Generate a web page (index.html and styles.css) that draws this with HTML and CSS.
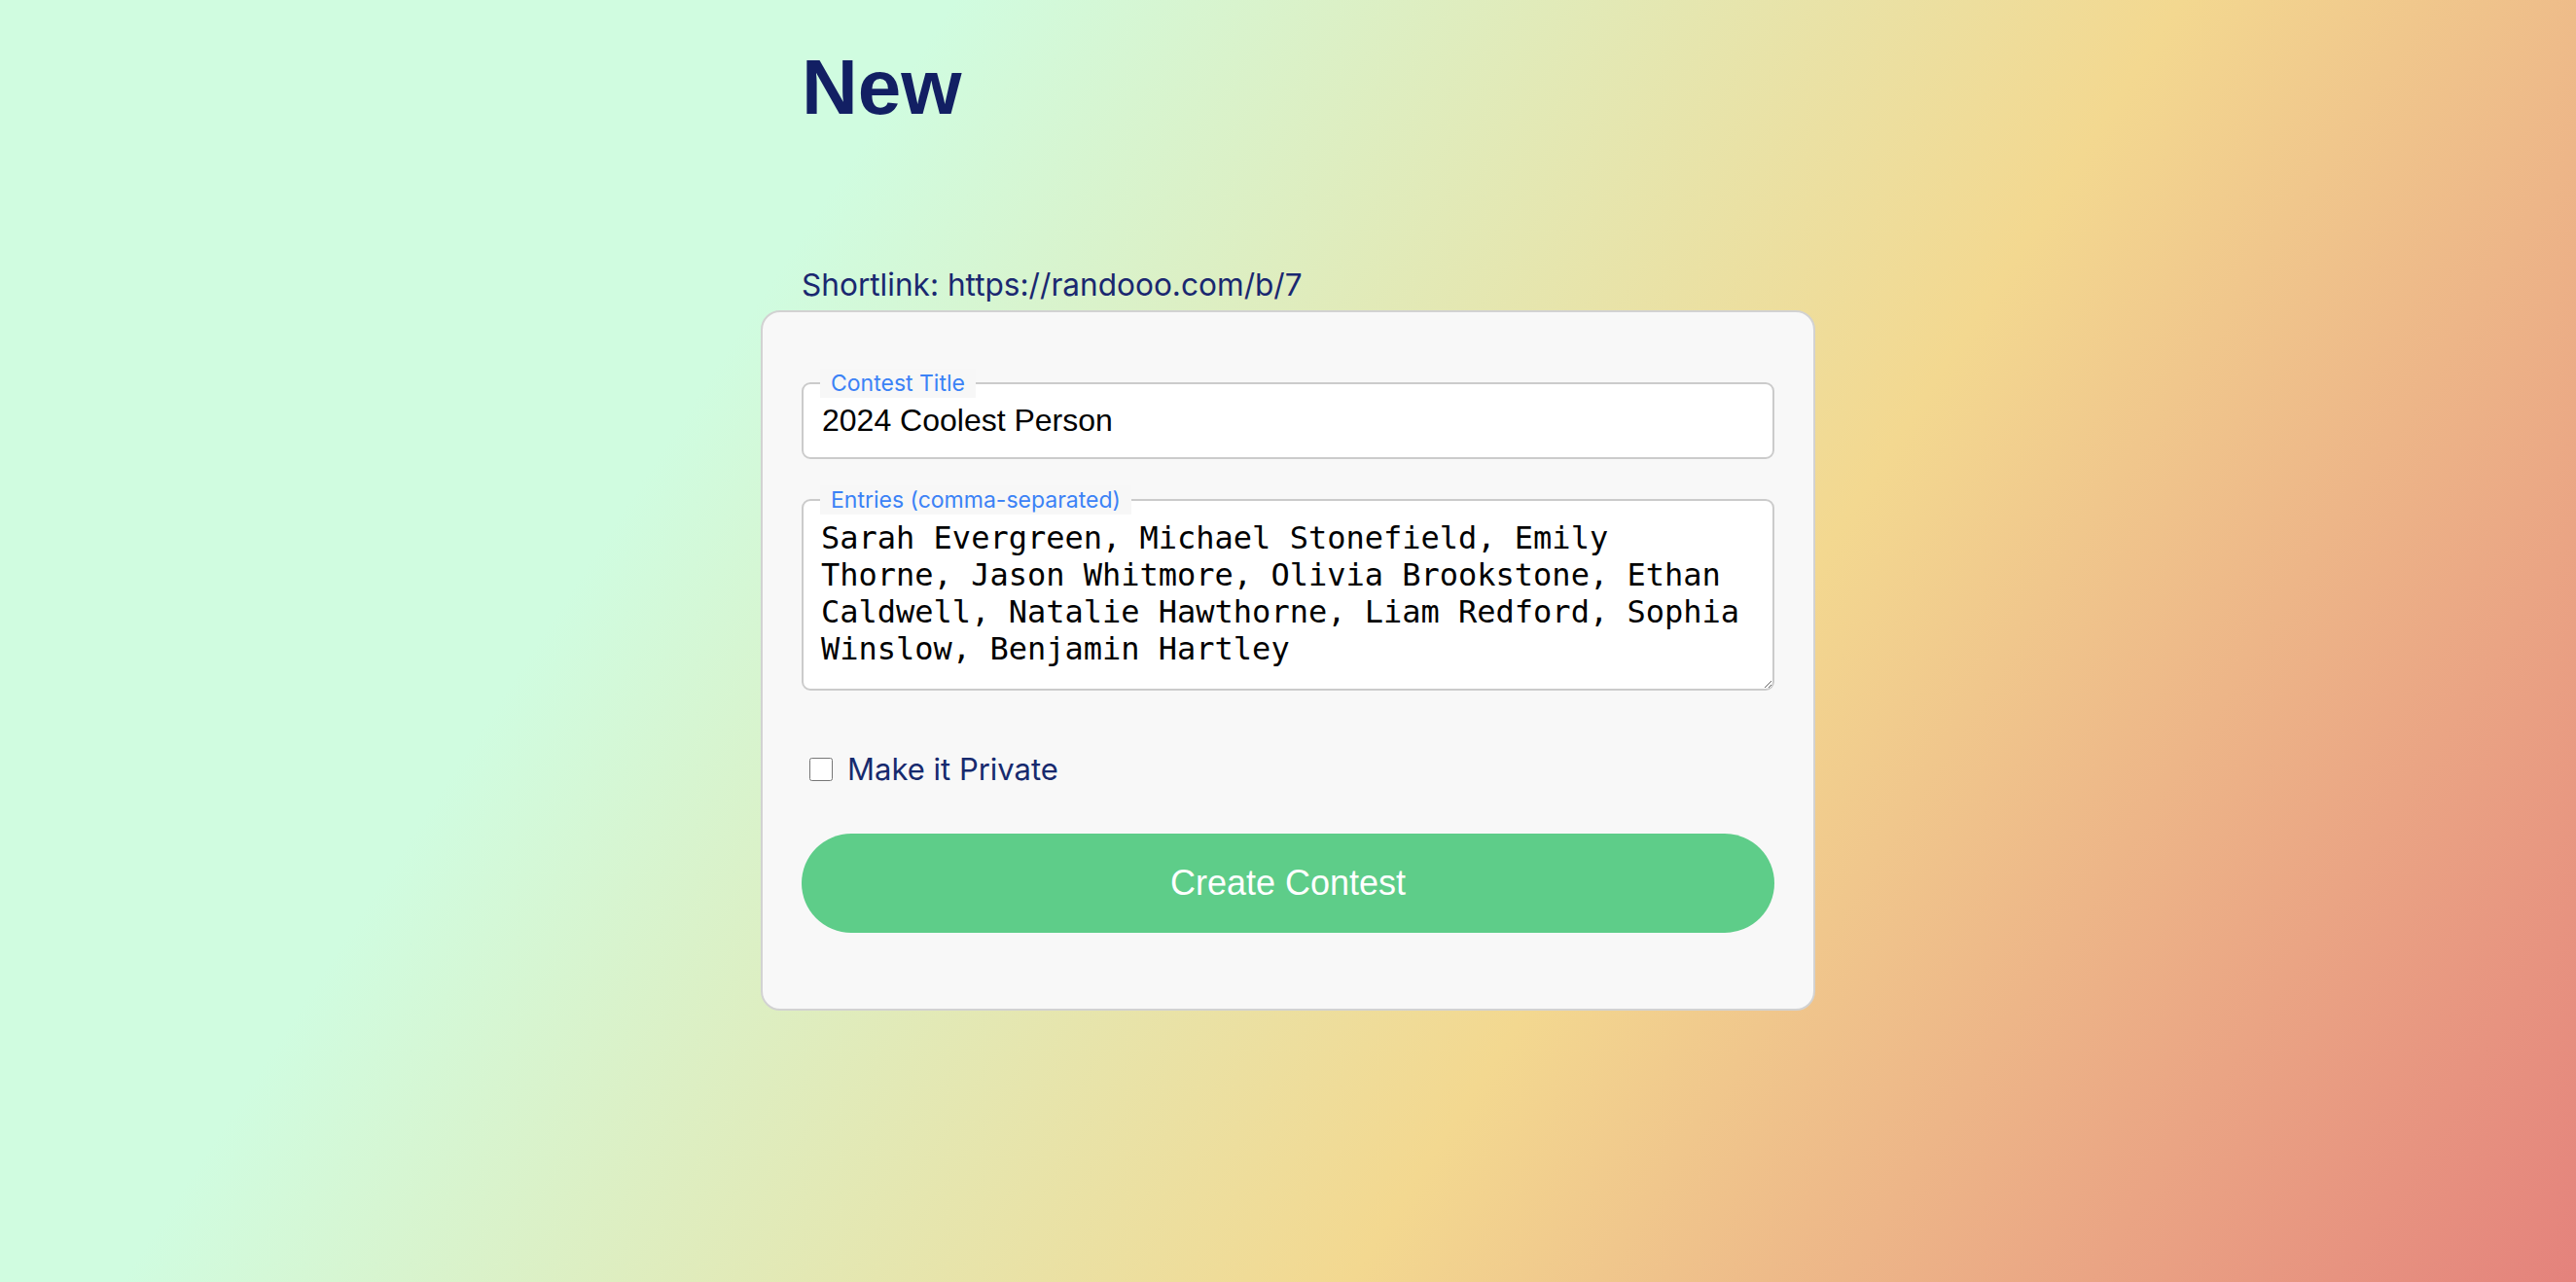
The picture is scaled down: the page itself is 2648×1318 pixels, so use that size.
FILE: index.html
```html
<!DOCTYPE html>
<html lang="en">
<head>
<meta charset="utf-8">
<title>New Contest</title>
<link rel="stylesheet" href="styles.css">
</head>
<body>
<main class="page">
  <header class="head">
    <h1 class="title">New</h1>
    <p class="shortlink">Shortlink: https://randooo.com/b/7</p>
  </header>
  <form class="card">
    <fieldset class="field field-title">
      <legend class="field-label">Contest Title</legend>
      <input class="text-input" type="text" value="2024 Coolest Person">
    </fieldset>
    <fieldset class="field field-entries">
      <legend class="field-label">Entries (comma-separated)</legend>
      <textarea class="text-area" rows="4">Sarah Evergreen, Michael Stonefield, Emily Thorne, Jason Whitmore, Olivia Brookstone, Ethan Caldwell, Natalie Hawthorne, Liam Redford, Sophia Winslow, Benjamin Hartley</textarea>
    </fieldset>
    <label class="check-row">
      <input class="check" type="checkbox">
      <span class="check-text">Make it Private</span>
    </label>
    <button class="submit" type="button">Create Contest</button>
  </form>
</main>
</body>
</html>
```
FILE: styles.css
```css
html {
  height: 100%;
}
body {
  margin: 0;
  min-height: 100%;
  font-family: "Inter", "Liberation Sans", sans-serif;
  background: linear-gradient(123deg, #d0fce0 28%, #f3d890 64%, #e4827c 100%);
}
.page {
  display: flex;
  flex-direction: column;
  align-items: center;
}
.head {
  width: 1000px;
}
.title {
  margin: 50px 0 0;
  font-family: "Liberation Sans", Arial, sans-serif;
  font-weight: 700;
  font-size: 80px;
  line-height: 1;
  color: #121f63;
}
.shortlink {
  margin: 144px 0 8px;
  font-size: 31.6px;
  line-height: 37px;
  color: #1a2870;
}
.card {
  width: 1000px;
  padding: 58px 40px 78px;
  background: #f8f8f8;
  border: 2px solid #d2d2d2;
  border-radius: 20px;
}
.field {
  margin: 0;
  padding: 0;
  min-inline-size: 0;
  background: #ffffff;
  border: 2px solid #cbcbcb;
  border-radius: 9px;
}
.field-entries {
  margin-top: 27px;
}
.field-label {
  margin-left: 17px;
  padding: 0 11px;
  font-size: 23px;
  line-height: 30px;
  color: #3b82f6;
  background: #f7f7f7;
}
.text-input {
  display: block;
  box-sizing: border-box;
  width: 100%;
  margin: 0;
  padding: 5px 19px 19px;
  border: none;
  outline: none;
  background: transparent;
  font-family: "Liberation Sans", Arial, sans-serif;
  font-size: 32px;
  color: #000;
}
.text-area {
  display: block;
  box-sizing: border-box;
  width: 100%;
  margin: 0;
  padding: 5px 19px 22px 18px;
  border: none;
  outline: none;
  background: transparent;
  font-family: "DejaVu Sans Mono", monospace;
  font-size: 32px;
  line-height: 38px;
  color: #000;
  border-radius: 0 0 8px 8px;
}
.check-row {
  display: flex;
  align-items: center;
  gap: 15px;
  margin-top: 62px;
}
.check {
  width: 24px;
  height: 24px;
  margin: 0 0 0 8px;
  accent-color: #5ecd89;
}
.check-text {
  font-size: 31px;
  line-height: 37.5px;
  color: #172a6e;
}
.submit {
  display: block;
  width: 100%;
  height: 102px;
  margin-top: 47px;
  border: none;
  border-radius: 51px;
  background: #5ecd89;
  color: #ffffff;
  font-family: "Liberation Sans", Arial, sans-serif;
  font-size: 36px;
}
```
